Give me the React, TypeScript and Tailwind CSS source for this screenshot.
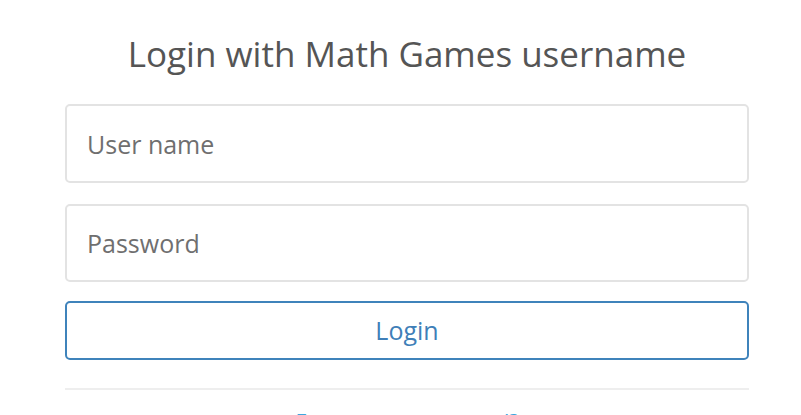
export default function App() {
  return (
    <div className="w-[801px] h-[415px] overflow-hidden bg-white" style={{ fontFamily: '"Open Sans", "Liberation Sans", sans-serif' }}>
      <div className="ml-[65px] w-[684px] pt-[30px]">
        <h1 className="text-center text-[35px] leading-[48px] text-[#555555]">Login with Math Games username</h1>
        <div className="mt-[26px] flex flex-col">
          <input
            placeholder="User name"
            className="h-[79px] w-full rounded-[5px] border-2 border-[#e3e3e3] px-[20px] text-[25px] text-[#555] placeholder:text-[#6f6f6f] outline-none"
          />
          <input
            placeholder="Password"
            className="mt-[21px] h-[78px] w-full rounded-[5px] border-2 border-[#e3e3e3] px-[20px] text-[25px] text-[#555] placeholder:text-[#6f6f6f] outline-none"
          />
          <button className="mt-[19px] h-[59px] w-full rounded-[5px] border-2 border-[#3f83bb] bg-white text-[25px] text-[#3f7fb8]">
            Login
          </button>
          <div className="mt-[28px] h-[2px] w-full bg-[#eeeeee]" />
          <a className="mt-[17px] block text-center text-[21px] leading-[30px] text-[#3ea6dd]">Forgot your password?</a>
        </div>
      </div>
    </div>
  );
}
